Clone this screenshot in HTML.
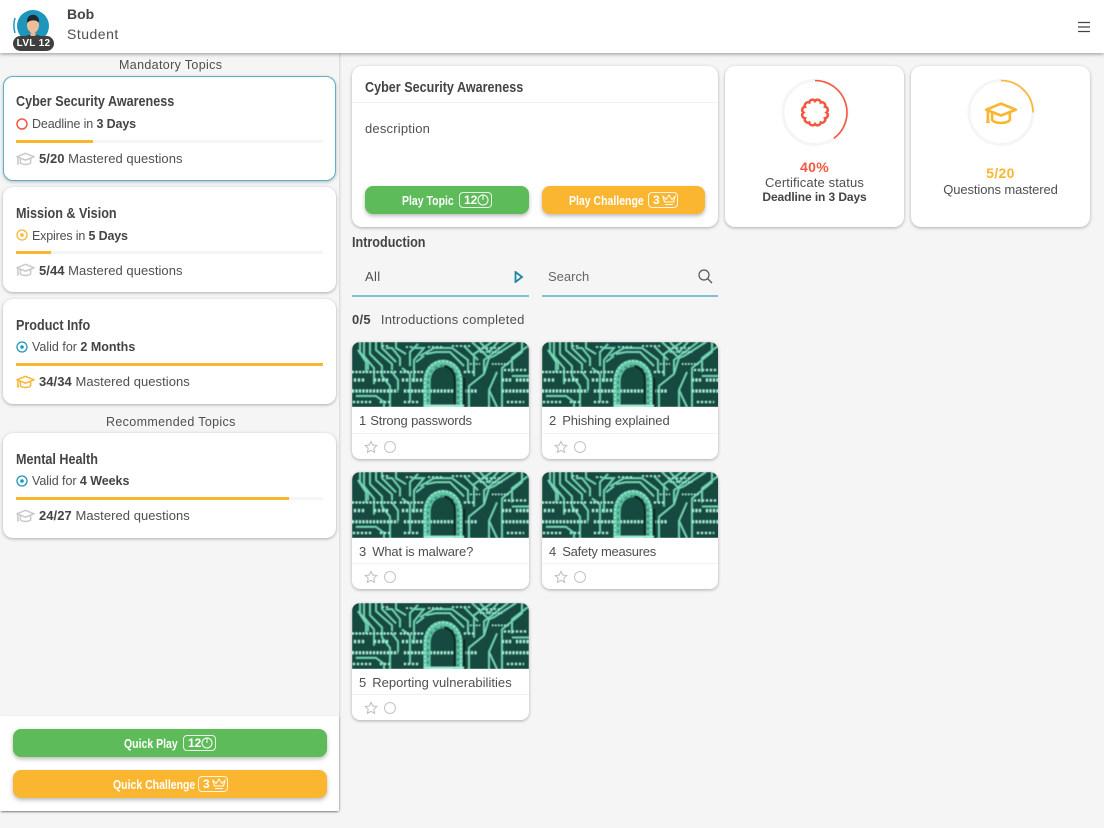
<!DOCTYPE html>
<html lang="en"><head><meta charset="utf-8"><title>Topics</title>
<style>
*{box-sizing:border-box}
html,body{margin:0;padding:0}
body{width:1104px;height:828px;position:relative;overflow:hidden;background:#f5f5f5;font-family:"Liberation Sans",sans-serif;color:#4a4a4a}
.a{position:absolute}
.t{position:absolute;white-space:nowrap;line-height:18px;font-size:13px;letter-spacing:.35px;color:#4f4f4f}
.h{font-weight:bold;font-size:15px;color:#444;letter-spacing:0;transform:scaleX(.84);transform-origin:0 50%}
.m{letter-spacing:.05px}
b{font-weight:bold;color:#444}
.card{position:absolute;background:#fff;border-radius:10px;box-shadow:0 1px 3px rgba(0,0,0,.3)}
.bar{position:absolute;left:16px;width:307px;height:3px;background:#f5f5f5}
.bar i{display:block;height:3px;background:#fbb631}
.btn{position:absolute;border-radius:8px;height:28px;box-shadow:0 2px 4px rgba(0,0,0,.28);color:#fff;font-weight:bold;font-size:12.500px;line-height:30px;white-space:nowrap}
.green{background:#5dbb5a}.orange{background:#fbb631}
.btn span{position:absolute;white-space:nowrap;transform:scaleX(.84);transform-origin:0 50%}
.badge{position:absolute;top:6px;height:16px;border:1px solid rgba(255,255,255,.85);border-radius:4px}
.badge em{position:absolute;left:4px;top:0;font-style:normal;line-height:15px;font-size:12px}
.badge svg{position:absolute;top:1px}
.tile{position:absolute;width:177px;height:117px;background:#fff;border-radius:8px;box-shadow:0 1px 3px rgba(0,0,0,.3);overflow:hidden}
.tile>svg.img{position:absolute;left:0;top:0;width:177px;height:65px}
.tile .line{position:absolute;left:0;right:0;top:91px;height:1px;background:#f2f2f2}
.tile .l{position:absolute;left:7px;top:70px;font-size:13px;line-height:18px;white-space:nowrap;color:#4f4f4f}
.tile .ic{position:absolute;left:12px;top:98px}
</style></head><body>
<svg width="0" height="0" style="position:absolute">
<filter id="bl" x="0" y="0" width="100%" height="100%"><feGaussianBlur stdDeviation=".45"/></filter>
<symbol id="cap" viewBox="0 0 20 14"><g fill="none" stroke="currentColor" stroke-width="1.600" stroke-linejoin="round"><path d="M10 1 19 4.700 10 8.200 1 4.700Z"/><path d="M4.600 6.500V11C6.500 13.300 13.500 13.300 15.400 11V6.500"/><path d="M2 5.500V10.500"/></g><path d="M1.300 10h1.500l.4 2.800H.9Z" fill="currentColor"/></symbol>
<symbol id="clock" viewBox="0 0 12 12"><circle cx="6" cy="6" r="5" fill="none" stroke="#fff" stroke-width="1"/><path d="M6 1V6" stroke="#fff" stroke-width="1"/></symbol>
<symbol id="crown" viewBox="0 0 14 12"><path d="M1 2.500 4 5.500 7 1 10 5.500 13 2.500 11.500 8H2.500Z M3 10.500H11" fill="none" stroke="#fff" stroke-width="1"/></symbol>
<symbol id="star" viewBox="0 0 14 14"><path d="M7 1.300 8.700 5 12.800 5.500 9.800 8.300 10.600 12.400 7 10.300 3.400 12.400 4.200 8.300 1.200 5.500 5.300 5Z" fill="none" stroke="#bdbdbd" stroke-width="1"/></symbol>
<symbol id="circ" viewBox="0 0 177 65" preserveAspectRatio="none">
<g filter="url(#bl)">
<rect width="177" height="65" fill="#174a3f"/>
<g fill="none" stroke="#74d8b8" stroke-width="1.700">
<path d="M8 0V10L16 20V28M12 0V14L22 26V42M18 0V12L30 24V34L38 44V65M24 0V8L40 22V28M30 0V6L44 20M6 8 14 20V30M44 0V6L54 12M34 6H40L48 16V24M40 30 46 38V48M60 6H72L62 18V40M50 26 58 32V60M66 2 58 10V24M4 54H24L32 60V65"/>
<path d="M176 4 160 16V30M170 0V10L150 26V48M150 48V65M140 0 122 12V34M156 0 132 18V32M132 32 117 44V65M112 4 126 18M120 0 137 16 132 32M145 30 137 48 145 65M137 48V65M164 0 142 14 137 16M128 0 137 10 146 0M160 34H177"/>
<path d="M68 14 82 6H100L116 18V30M74 12 84 10H98L112 24M64 20 72 14"/>
</g>
<g fill="none" stroke="#a3f0d9">
<path d="M0 30H45M48 30H60M62 30H72" stroke-width="2" stroke-dasharray="2 1.500"/>
<path d="M0 49H46M52 49H72M78 49H106M112 49H126" stroke-width="3" stroke-dasharray="2 1.500"/>
<path d="M2 38H14M22 38H38M50 38H56M60 38H70" stroke-width="3" stroke-dasharray="2 2"/>
<path d="M1 60H20M28 60H40M52 60H66" stroke-width="2" stroke-dasharray="2 2"/>
<path d="M150 49H177M150 38H160M164 38H177" stroke-width="3" stroke-dasharray="2 1.500"/>
<path d="M112 30H122M152 28H176M155 60H172" stroke-width="2" stroke-dasharray="2 2"/>
<path d="M30 4H38M54 5H62M76 5H92M100 4H120M126 6H150" stroke-width="1.500" stroke-dasharray="2 2"/>
<path d="M128 10H150M118 22H128M140 22H158" stroke-width="1.500" stroke-dasharray="1.500 1.500"/>
</g>
<path d="M75 66V40C75 15 107 15 107 40V66" fill="none" stroke="#5fc4a5" stroke-width="7"/>
<path d="M73 66V40C73 12 109 12 109 40V66" fill="none" stroke="#a3f0d9" stroke-width="1.500" stroke-dasharray="2 2"/>
<path d="M76 66V40C76 18 106 18 106 40V66" fill="none" stroke="#2f7d69" stroke-width="1.500" stroke-dasharray="3 3"/>
<path d="M103 66V38C103 30 98 25 92 24" fill="none" stroke="#0b2a24" stroke-width="2.500"/>
<path d="M112 66V36" stroke="#0c2a24" stroke-width="3"/>
<path d="M72 64H112" stroke="#a3f0d9" stroke-width="2.500"/>
</g>
</symbol>
</svg>

<!-- sidebar -->
<div class="a" style="left:0;top:53px;width:339px;height:758px;background:#f5f5f5;box-shadow:1px 0 2px rgba(0,0,0,.14)"></div>
<div class="a" style="left:0;top:716px;width:339px;height:95px;background:#fff;box-shadow:0 2px 2px -1px rgba(0,0,0,.45),1px 0 1px rgba(0,0,0,.12)"></div>

<!-- header -->
<div class="a" style="left:0;top:0;width:1104px;height:53px;background:#fff;box-shadow:0 1px 4px rgba(0,0,0,.4)"></div>
<svg class="a" style="left:12px;top:9px" width="44" height="44" viewBox="0 0 44 44">
<path d="M3 9C1.500 14 1.500 19 3 24" fill="none" stroke="#1f97bd" stroke-width="1.500"/>
<circle cx="21" cy="17" r="16" fill="#1e96bc"/>
<path d="M9 33C10 27 15 26 21 26S32 27 33 33Z" fill="#20303a"/>
<rect x="18.500" y="21" width="5" height="7" fill="#e9b48f"/>
<ellipse cx="21" cy="16" rx="6" ry="7.800" fill="#efbd98"/>
<path d="M15 14C13.500 3 28.500 3 27 14 25 10.500 18 10.500 15 14Z" fill="#1d2a35"/>
</svg>
<div class="a" style="left:13px;top:36px;width:41px;height:15px;background:#3f3f3f;border-radius:8px;color:#fff;font-size:10px;line-height:15px;text-align:center;font-weight:bold;letter-spacing:.3px">LVL 12</div>
<div class="t" style="left:67px;top:5px;font-size:14px;font-weight:bold;color:#444;letter-spacing:0">Bob</div>
<div class="t" style="left:67px;top:25px;font-size:14px;letter-spacing:.5px">Student</div>
<svg class="a" style="left:1078px;top:21px" width="12" height="12" viewBox="0 0 12 12"><path d="M0 1.500H12M0 6H12M0 10.500H12" stroke="#444" stroke-width="1.200"/></svg>

<!-- sidebar content -->
<div class="t" style="left:119px;top:56px;font-size:12.500px">Mandatory Topics</div>

<div class="card" style="left:3px;top:76px;width:333px;height:105px;border:1px solid #5cafc8;box-shadow:0 1px 3px rgba(0,0,0,.25)"></div>
<div class="t h" style="left:16px;top:93px">Cyber Security Awareness</div>
<svg class="a" style="left:16px;top:118px" width="12" height="12"><circle cx="6" cy="6" r="5" fill="none" stroke="#f4573f" stroke-width="1.500"/></svg>
<div class="t" style="left:32px;top:115px;font-size:12.500px;letter-spacing:-.13px">Deadline in <b>3 Days</b></div>
<div class="bar" style="top:140px"><i style="width:77px"></i></div>
<svg class="a" style="left:16px;top:152px;color:#c9c9c9" width="19" height="14"><use href="#cap"/></svg>
<div class="t m" style="left:39px;top:150px"><b>5/20</b> Mastered questions</div>

<div class="card" style="left:3px;top:187px;width:333px;height:105px"></div>
<div class="t h" style="left:16px;top:205px">Mission &amp; Vision</div>
<svg class="a" style="left:16px;top:229px" width="12" height="12"><circle cx="6" cy="6" r="5" fill="none" stroke="#fbb631" stroke-width="1.300"/><circle cx="6" cy="6" r="1.800" fill="#fbb631"/></svg>
<div class="t" style="left:32px;top:227px;font-size:12.500px;letter-spacing:-.17px">Expires in <b>5 Days</b></div>
<div class="bar" style="top:251px"><i style="width:35px"></i></div>
<svg class="a" style="left:16px;top:263px;color:#c9c9c9" width="19" height="14"><use href="#cap"/></svg>
<div class="t m" style="left:39px;top:262px"><b>5/44</b> Mastered questions</div>

<div class="card" style="left:3px;top:299px;width:333px;height:105px"></div>
<div class="t h" style="left:16px;top:317px">Product Info</div>
<svg class="a" style="left:16px;top:341px" width="12" height="12"><circle cx="6" cy="6" r="5" fill="none" stroke="#1e96bc" stroke-width="1.300"/><circle cx="6" cy="6" r="1.800" fill="#1e96bc"/></svg>
<div class="t" style="left:32px;top:338px;font-size:12.500px;letter-spacing:0">Valid for <b>2 Months</b></div>
<div class="bar" style="top:363px"><i style="width:307px"></i></div>
<svg class="a" style="left:16px;top:375px;color:#fbb631" width="19" height="14"><use href="#cap"/></svg>
<div class="t m" style="left:39px;top:373px"><b>34/34</b> Mastered questions</div>

<div class="t" style="left:106px;top:413px;font-size:12.500px">Recommended Topics</div>

<div class="card" style="left:3px;top:433px;width:333px;height:105px"></div>
<div class="t h" style="left:16px;top:451px">Mental Health</div>
<svg class="a" style="left:16px;top:475px" width="12" height="12"><circle cx="6" cy="6" r="5" fill="none" stroke="#1e96bc" stroke-width="1.300"/><circle cx="6" cy="6" r="1.800" fill="#1e96bc"/></svg>
<div class="t" style="left:32px;top:472px;font-size:12.500px;letter-spacing:-.05px">Valid for <b>4 Weeks</b></div>
<div class="bar" style="top:497px"><i style="width:273px"></i></div>
<svg class="a" style="left:16px;top:509px;color:#c9c9c9" width="19" height="14"><use href="#cap"/></svg>
<div class="t m" style="left:39px;top:507px"><b>24/27</b> Mastered questions</div>

<!-- quick buttons -->
<div class="btn green" style="left:13px;top:729px;width:314px"><span style="left:111px">Quick Play</span>
<div class="badge" style="left:170px;width:33px"><em>12</em><svg style="left:17px" width="12" height="12"><use href="#clock"/></svg></div></div>
<div class="btn orange" style="left:13px;top:770px;width:314px"><span style="left:100px">Quick Challenge</span>
<div class="badge" style="left:185px;width:30px"><em>3</em><svg style="left:13px" width="14" height="12"><use href="#crown"/></svg></div></div>

<!-- topic card -->
<div class="card" style="left:352px;top:66px;width:366px;height:161px"></div>
<div class="a" style="left:352px;top:102px;width:366px;height:1px;background:#f2f2f2"></div>
<div class="t h" style="left:365px;top:79px">Cyber Security Awareness</div>
<div class="t" style="left:365px;top:120px;letter-spacing:.2px">description</div>
<div class="btn green" style="left:365px;top:186px;width:164px"><span style="left:37px">Play Topic</span>
<div class="badge" style="left:94px;width:33px"><em>12</em><svg style="left:17px" width="12" height="12"><use href="#clock"/></svg></div></div>
<div class="btn orange" style="left:542px;top:186px;width:163px"><span style="left:27px">Play Challenge</span>
<div class="badge" style="left:106px;width:30px"><em>3</em><svg style="left:13px" width="14" height="12"><use href="#crown"/></svg></div></div>

<!-- stat cards -->
<div class="card" style="left:725px;top:66px;width:179px;height:161px"></div>
<svg class="a" style="left:780px;top:77px" width="70" height="71" viewBox="0 0 70 71">
<circle cx="35" cy="35.500" r="32" fill="none" stroke="#f5f5f5" stroke-width="3"/>
<path d="M35 3.500A32 32 0 0 1 53.800 61.400" fill="none" stroke="#f4573f" stroke-width="1.600"/>
<path d="M46.500 35.500A3.200 3.200 0 0 1 44.960 41.250A3.200 3.200 0 0 1 40.750 45.460A3.200 3.200 0 0 1 35 47A3.200 3.200 0 0 1 29.250 45.460A3.200 3.200 0 0 1 25.040 41.250A3.200 3.200 0 0 1 23.500 35.500A3.200 3.200 0 0 1 25.040 29.750A3.200 3.200 0 0 1 29.250 25.540A3.200 3.200 0 0 1 35 24A3.200 3.200 0 0 1 40.750 25.540A3.200 3.200 0 0 1 44.960 29.750A3.200 3.200 0 0 1 46.500 35.500Z" fill="none" stroke="#f4573f" stroke-width="2.500"/>
</svg>
<div class="t" style="left:725px;width:179px;text-align:center;top:158px;color:#f4573f;font-weight:bold;font-size:14px">40%</div>
<div class="t" style="left:725px;width:179px;text-align:center;top:174px;letter-spacing:.12px">Certificate status</div>
<div class="t" style="left:725px;width:179px;text-align:center;top:188px;font-weight:bold;color:#444;font-size:12px;letter-spacing:-.1px">Deadline in 3 Days</div>

<div class="card" style="left:911px;top:66px;width:179px;height:161px"></div>
<svg class="a" style="left:966px;top:77px" width="70" height="71" viewBox="0 0 70 71">
<circle cx="35" cy="35.500" r="32" fill="none" stroke="#f5f5f5" stroke-width="3"/>
<path d="M35 3.500A32 32 0 0 1 67 35.500" fill="none" stroke="#fbb631" stroke-width="1.600"/>
</svg>
<svg class="a" style="left:984px;top:102px;color:#fbb631" width="34" height="23"><use href="#cap"/></svg>
<div class="t" style="left:911px;width:179px;text-align:center;top:164px;color:#fbb631;font-weight:bold;font-size:14px">5/20</div>
<div class="t" style="left:911px;width:179px;text-align:center;top:181px;letter-spacing:-.1px">Questions mastered</div>

<!-- introduction -->
<div class="t h" style="left:352px;top:234px">Introduction</div>
<div class="t" style="left:365px;top:268px">All</div>
<svg class="a" style="left:514px;top:271px" width="10" height="12" viewBox="0 0 10 12"><path d="M1.500 1 8 6 1.500 11Z" fill="none" stroke="#1e86a8" stroke-width="1.800"/></svg>
<div class="a" style="left:352px;top:295px;width:177px;height:2px;background:#84bfcc"></div>
<div class="t" style="left:548px;top:268px;color:#666;letter-spacing:0">Search</div>
<svg class="a" style="left:698px;top:269px" width="15" height="15" viewBox="0 0 15 15"><circle cx="6" cy="6" r="5" fill="none" stroke="#555" stroke-width="1.200"/><path d="M9.800 9.800 14 14" stroke="#555" stroke-width="1.300"/></svg>
<div class="a" style="left:542px;top:295px;width:176px;height:2px;background:#84bfcc"></div>
<div class="t" style="left:352px;top:311px;letter-spacing:.25px"><b>0/5</b><span style="margin-left:10px">Introductions completed</span></div>

<!-- tiles -->
<div class="tile" style="left:352px;top:342px"><svg class="img" viewBox="0 0 177 65"><use href="#circ" width="177" height="65"/></svg><div class="l">1<span style="margin-left:4px;letter-spacing:-.15px">Strong passwords</span></div><div class="line"></div><svg class="ic" width="36" height="14"><use href="#star" width="14" height="14"/><circle cx="26" cy="7" r="5.500" fill="none" stroke="#c4c4c4"/></svg></div>
<div class="tile" style="left:542px;top:342px;width:176px"><svg class="img" viewBox="0 0 177 65"><use href="#circ" width="177" height="65"/></svg><div class="l">2<span style="margin-left:6px;letter-spacing:-.1px">Phishing explained</span></div><div class="line"></div><svg class="ic" width="36" height="14"><use href="#star" width="14" height="14"/><circle cx="26" cy="7" r="5.500" fill="none" stroke="#c4c4c4"/></svg></div>
<div class="tile" style="left:352px;top:472px"><svg class="img" style="height:66px" viewBox="0 0 177 65" preserveAspectRatio="none"><use href="#circ" width="177" height="65"/></svg><div class="l" style="top:71px">3<span style="margin-left:6px;letter-spacing:-.15px">What is malware?</span></div><div class="line"></div><svg class="ic" width="36" height="14"><use href="#star" width="14" height="14"/><circle cx="26" cy="7" r="5.500" fill="none" stroke="#c4c4c4"/></svg></div>
<div class="tile" style="left:542px;top:472px;width:176px"><svg class="img" style="height:66px" viewBox="0 0 177 65" preserveAspectRatio="none"><use href="#circ" width="177" height="65"/></svg><div class="l" style="top:71px">4<span style="margin-left:6px;letter-spacing:-.25px">Safety measures</span></div><div class="line"></div><svg class="ic" width="36" height="14"><use href="#star" width="14" height="14"/><circle cx="26" cy="7" r="5.500" fill="none" stroke="#c4c4c4"/></svg></div>
<div class="tile" style="left:352px;top:603px"><svg class="img" style="height:66px" viewBox="0 0 177 65" preserveAspectRatio="none"><use href="#circ" width="177" height="65"/></svg><div class="l" style="top:71px">5<span style="margin-left:6px;letter-spacing:.03px">Reporting vulnerabilities</span></div><div class="line"></div><svg class="ic" width="36" height="14"><use href="#star" width="14" height="14"/><circle cx="26" cy="7" r="5.500" fill="none" stroke="#c4c4c4"/></svg></div>
</body></html>
